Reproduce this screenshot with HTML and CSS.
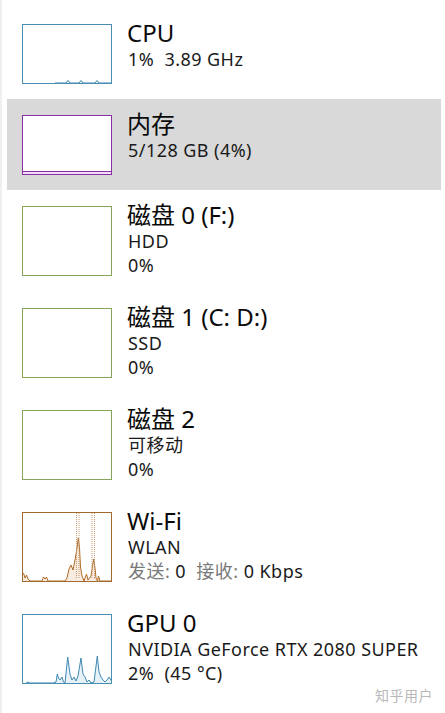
FILE: index.html
```html
<!DOCTYPE html>
<html lang="zh">
<head>
<meta charset="utf-8">
<title>性能</title>
<link rel="stylesheet" href="styles.css">
</head>
<body>
<div class="panel">
  <div class="row">
    <svg class="chart" viewBox="0 0 90 60">
      <path class="fill-cpu" d="M33,59.5 L44,59.5 L46,56.5 L48,59.5 L57,59.5 L59,56.5 L61,59.5 L73,59.5 L75,56.5 L77,59.5 L89.5,59.5 Z"/>
      <path class="line-cpu" d="M33,59 L44,59 L46,56.5 L48,59 L57,59 L59,56.5 L61,59 L73,59 L75,56.5 L77,59 L89.5,59"/>
      <rect class="box-cpu" x="0.5" y="0.5" width="89" height="59"/>
    </svg>
    <div class="info">
      <div class="title">CPU</div>
      <div class="sub">1%&nbsp; 3.89 GHz</div>
    </div>
  </div>

  <div class="row selected">
    <svg class="chart" viewBox="0 0 90 60">
      <rect class="mem-fill" x="0.5" y="56.5" width="89" height="3"/>
      <line class="mem-line" x1="0.5" y1="56.5" x2="89.5" y2="56.5"/>
      <rect class="box-mem" x="0.5" y="0.5" width="89" height="59"/>
    </svg>
    <div class="info">
      <div class="title">内存</div>
      <div class="sub">5/128 GB (4%)</div>
    </div>
  </div>

  <div class="row tall">
    <svg class="chart" viewBox="0 0 90 70">
      <rect class="box-disk" x="0.5" y="0.5" width="89" height="69"/>
    </svg>
    <div class="info">
      <div class="title">磁盘 0 (F:)</div>
      <div class="sub">HDD</div>
      <div class="sub">0%</div>
    </div>
  </div>

  <div class="row tall">
    <svg class="chart" viewBox="0 0 90 70">
      <rect class="box-disk" x="0.5" y="0.5" width="89" height="69"/>
    </svg>
    <div class="info">
      <div class="title">磁盘 1 (C: D:)</div>
      <div class="sub">SSD</div>
      <div class="sub">0%</div>
    </div>
  </div>

  <div class="row tall">
    <svg class="chart" viewBox="0 0 90 70">
      <rect class="box-disk" x="0.5" y="0.5" width="89" height="69"/>
    </svg>
    <div class="info">
      <div class="title">磁盘 2</div>
      <div class="sub">可移动</div>
      <div class="sub">0%</div>
    </div>
  </div>

  <div class="row tall">
    <svg class="chart" viewBox="0 0 90 70">
      <path class="fill-wifi" d="M0.5,69.5 L0.5,62 L1.5,61 L3,66 L4.5,63 L6,67 L8,69 L20,69 L21.5,65 L23,67 L24.5,65 L26,69 L43,69 L45,66 L47,57 L49,53 L51,58 L53,48 L55,36 L56.3,26 L57.5,36 L58.5,55 L60,64 L62,69 L63,66 L64.5,62 L66,68 L69,64 L70.5,54 L71.7,47 L73,56 L74,66 L75.5,69 L76.5,64 L78,69 L89.5,69.5 Z"/>
      <path class="line-wifi" d="M0.5,62 L1.5,61 L3,66 L4.5,63 L6,67 L8,69 L20,69 L21.5,65 L23,67 L24.5,65 L26,69 L43,69 L45,66 L47,57 L49,53 L51,58 L53,48 L55,36 L56.3,26 L57.5,36 L58.5,55 L60,64 L62,69 L63,66 L64.5,62 L66,68 L69,64 L70.5,54 L71.7,47 L73,56 L74,66 L75.5,69 L76.5,64 L78,69 L89.5,69"/>
      <line class="dot-wifi" x1="54.5" y1="1" x2="54.5" y2="66"/>
      <line class="dot-wifi" x1="57" y1="1" x2="57" y2="66"/>
      <line class="dot-wifi" x1="70" y1="1" x2="70" y2="66"/>
      <line class="dot-wifi" x1="72.5" y1="1" x2="72.5" y2="66"/>
      <rect class="box-wifi" x="0.5" y="0.5" width="89" height="69"/>
    </svg>
    <div class="info">
      <div class="title">Wi-Fi</div>
      <div class="sub">WLAN</div>
      <div class="sub"><span class="label">发送:</span> 0&nbsp; <span class="label">接收:</span> 0 Kbps</div>
    </div>
  </div>

  <div class="row tall">
    <svg class="chart" viewBox="0 0 90 70">
      <path class="fill-cpu" d="M4,69.5 L6,68.5 L8,69.5 L31,69.5 L34,68 L35.3,60 L36.5,64 L38,66 L40,63 L41.5,68 L43,69 L45.7,43 L48,60 L50,66 L52,63 L54,67 L56,62 L59,44 L61,60 L63,63 L65,68 L67,66 L69,69 L72,68 L75.3,42 L77,58 L79,63 L81,66 L83,68 L85,66 L87,63 L89.5,67 L89.5,69.5 Z"/>
      <path class="line-cpu" d="M4,69 L6,68 L8,69 L31,69 L34,68 L35.3,60 L36.5,64 L38,66 L40,63 L41.5,68 L43,69 L45.7,43 L48,60 L50,66 L52,63 L54,67 L56,62 L59,44 L61,60 L63,63 L65,68 L67,66 L69,69 L72,68 L75.3,42 L77,58 L79,63 L81,66 L83,68 L85,66 L87,63 L89.5,67"/>
      <rect class="box-cpu" x="0.5" y="0.5" width="89" height="69"/>
    </svg>
    <div class="info">
      <div class="title">GPU 0</div>
      <div class="sub">NVIDIA GeForce RTX 2080 SUPER</div>
      <div class="sub">2%&nbsp; (45 °C)</div>
    </div>
  </div>
</div>
<div class="watermark">知乎用户</div>
</body>
</html>
```

FILE: styles.css
```css
html, body {
  margin: 0;
  padding: 0;
  background: #ffffff;
}

body {
  font-family: "Noto Sans", "Noto Sans CJK SC", sans-serif;
  color: #000000;
  position: relative;
  width: 445px;
  height: 713px;
  overflow: hidden;
}

.panel {
  box-sizing: border-box;
  height: 713px;
  border-left: 2px solid #efefef;
  padding: 8px 4px 0 5px;
  display: flex;
  flex-direction: column;
}

.row {
  display: flex;
  align-items: flex-start;
  gap: 15px;
  padding: 16px 0 15px 15px;
}

.row.tall {
  padding-bottom: 16px;
}

.row.selected {
  background: #d9d9d9;
}

.chart {
  display: block;
  flex: none;
  width: 90px;
  height: 60px;
  background: #ffffff;
}

.tall .chart {
  height: 70px;
}

.chart rect,
.chart line,
.chart path {
  stroke-width: 1;
}

.box-cpu { fill: none; stroke: #4a8db3; }
.line-cpu { fill: none; stroke: #3f89b3; }
.fill-cpu { fill: #e6f1f8; stroke: none; }

.box-mem { fill: none; stroke: #8b2fa8; }
.mem-line { stroke: #8b2fa8; }
.mem-fill { fill: #f1def5; stroke: none; }

.box-disk { fill: none; stroke: #84a55a; }

.box-wifi { fill: none; stroke: #a26a30; }
.line-wifi { fill: none; stroke: #b06c28; }
.fill-wifi { fill: #f8ece1; stroke: none; }
.dot-wifi { stroke: #c89a70; stroke-dasharray: 1 1; }

.info {
  margin-top: -6px;
  margin-bottom: -10px;
  display: flex;
  flex-direction: column;
  white-space: nowrap;
}

.title {
  font-size: 24px;
  line-height: 29px;
  color: #0a0a0a;
}

.sub {
  font-size: 18px;
  line-height: 24px;
  letter-spacing: 0.45px;
  padding-left: 1px;
  color: #1a1a1a;
}

.label {
  color: #7a7a7a;
}

.watermark {
  position: absolute;
  right: 12px;
  bottom: 8px;
  font-size: 14px;
  line-height: 18px;
  color: #b8b8b8;
  letter-spacing: 0.5px;
}
```
